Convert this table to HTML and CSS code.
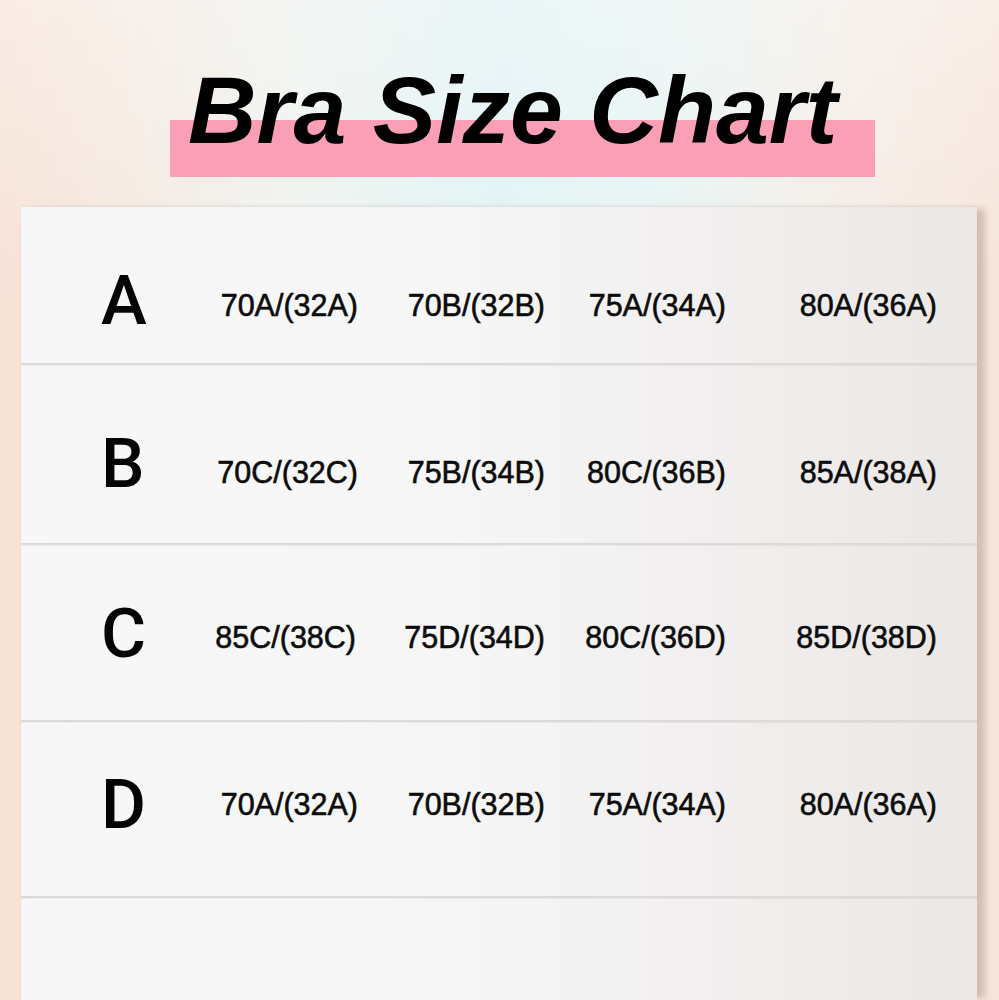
FILE: index.html
```html
<!DOCTYPE html>
<html lang="en">
<head>
<meta charset="utf-8">
<title>Bra Size Chart</title>
<link rel="stylesheet" href="styles.css">
</head>
<body>
<div class="page">
  <header class="header">
    <h1 class="title">Bra Size Chart</h1>
  </header>
  <section class="card">
    <div class="row row-a">
      <div class="cup">A</div>
      <div class="size">70A/(32A)</div>
      <div class="size">70B/(32B)</div>
      <div class="size">75A/(34A)</div>
      <div class="size">80A/(36A)</div>
    </div>
    <div class="row row-b">
      <div class="cup">B</div>
      <div class="size">70C/(32C)</div>
      <div class="size">75B/(34B)</div>
      <div class="size">80C/(36B)</div>
      <div class="size">85A/(38A)</div>
    </div>
    <div class="row row-c">
      <div class="cup">C</div>
      <div class="size size-wide">85C/(38C)</div>
      <div class="size">75D/(34D)</div>
      <div class="size">80C/(36D)</div>
      <div class="size">85D/(38D)</div>
    </div>
    <div class="row row-d">
      <div class="cup">D</div>
      <div class="size">70A/(32A)</div>
      <div class="size">70B/(32B)</div>
      <div class="size">75A/(34A)</div>
      <div class="size">80A/(36A)</div>
    </div>
    <div class="row row-e"></div>
  </section>
</div>
</body>
</html>
```

FILE: styles.css
```css
html, body {
  margin: 0;
  padding: 0;
}

body {
  width: 999px;
  height: 1000px;
  overflow: hidden;
  background:
    linear-gradient(to bottom, rgba(255,255,255,0.35) 0%, rgba(255,255,255,0) 30%),
    linear-gradient(to right, #f6e2d6 0%, #f5e8df 12%, #eef2ee 30%, #e0f2f4 50%, #e8f3f2 68%, #f4ece5 85%, #f6e4da 100%);
  font-family: "Liberation Sans", Arial, sans-serif;
  color: #111;
}

.page {
  display: flex;
  flex-direction: column;
  height: 1000px;
  overflow: hidden;
}

.header {
  height: 207px;
  flex: none;
  display: flex;
  align-items: flex-start;
}

.title {
  margin: 60px 0 0 170px;
  width: 705px;
  box-sizing: border-box;
  height: 117px;
  padding: 0 0 0 18px;
  font-family: "Liberation Sans", Arial, sans-serif;
  font-style: italic;
  font-weight: 700;
  font-size: 95px;
  line-height: 100px;
  color: #000;
  white-space: nowrap;
  background: linear-gradient(to bottom, transparent 0, transparent 60px, #fa9fb5 60px, #fa9fb5 100%);
}

.card {
  margin-left: 21px;
  width: 956px;
  flex: 1;
  background: linear-gradient(to right, #f7f7f7 0%, #f6f6f6 45%, #f1efee 75%, #eae7e5 100%);
  box-shadow: 10px 0 6px -2px rgba(160, 130, 120, 0.4), 0 -1px 2px rgba(0,0,0,0.04);
}

.row {
  display: grid;
  grid-template-columns: 99px 158px 187px 181px 211px;
  padding: var(--pt) 40px 0 80px;
  box-sizing: border-box;
  height: var(--h);
  align-items: start;
  border-bottom: 2px solid #dcdad8;
  box-shadow: 0 1px 1px rgba(0,0,0,0.04);
}

.row-a { --h: 158px; --pt: 59px; --vo: 24px; }
.row-b { --h: 180px; --pt: 64px; --vo: 28px; }
.row-c { --h: 177px; --pt: 54px; --vo: 23px; }
.row-d { --h: 176px; --pt: 48px; --vo: 19px; }
.row-e { --h: 102px; --pt: 0px; border-bottom: none; box-shadow: none; }

.cup {
  font-family: Roboto, "Liberation Sans", sans-serif;
  font-weight: 500;
  font-size: 69px;
  line-height: 1;
  color: #050505;
}

.size {
  justify-self: end;
  margin-top: var(--vo);
  font-size: 30.5px;
  line-height: 1;
  color: #0c0c0c;
  white-space: nowrap;
  -webkit-text-stroke: 0.6px #0c0c0c;
}

.size-wide {
  margin-right: 2px;
}
```
